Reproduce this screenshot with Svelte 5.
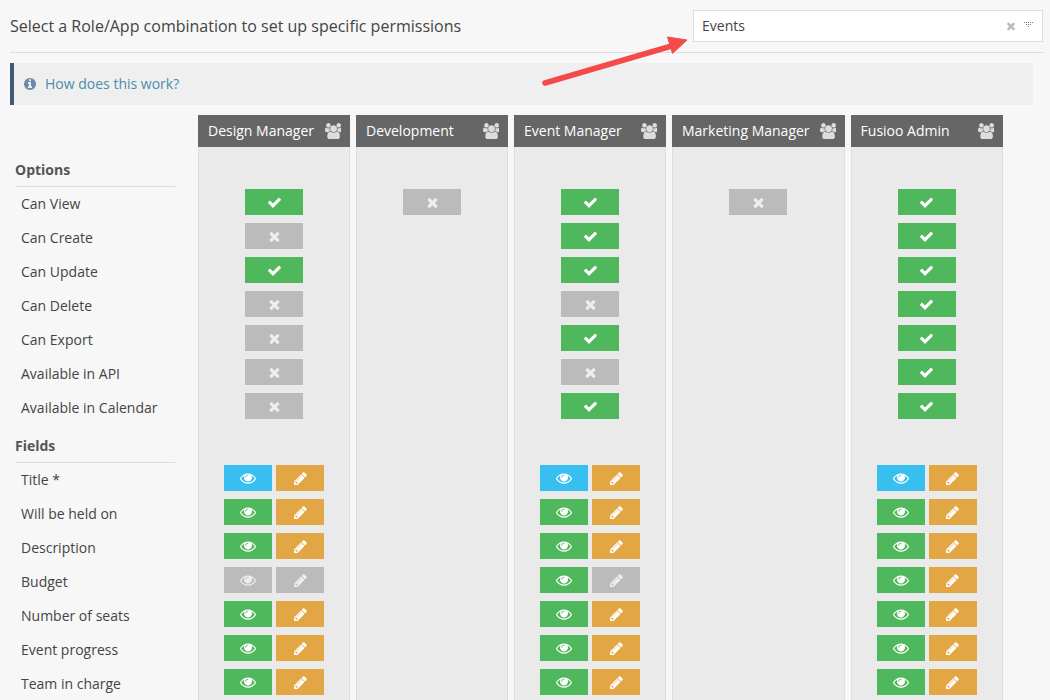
<script>
  const Y = 'y', N = 'n';
  const optionNames = ['Can View', 'Can Create', 'Can Update', 'Can Delete', 'Can Export', 'Available in API', 'Available in Calendar'];
  const fieldNames = ['Title *', 'Will be held on', 'Description', 'Budget', 'Number of seats', 'Event progress', 'Team in charge'];

  // view / edit colour per field: b = blue, g = green, o = orange, x = grey
  const allOn = [['b','o'],['g','o'],['g','o'],['g','o'],['g','o'],['g','o'],['g','o']];
  const roles = [
    { name: 'Design Manager', options: [Y,N,Y,N,N,N,N],
      fields: [['b','o'],['g','o'],['g','o'],['x','x'],['g','o'],['g','o'],['g','o']] },
    { name: 'Development', options: [N], fields: [] },
    { name: 'Event Manager', options: [Y,Y,Y,N,Y,N,Y],
      fields: [['b','o'],['g','o'],['g','o'],['g','x'],['g','o'],['g','o'],['g','o']] },
    { name: 'Marketing Manager', options: [N], fields: [] },
    { name: 'Fusioo Admin', options: [Y,Y,Y,Y,Y,Y,Y], fields: allOn }
  ];

  const caretDots = [[0,0],[2,0],[4,0],[6,0],[8,0],[2,2],[4,2],[6,2],[4,4]];

  const icons = {
    check: 'M1671 566q0 40-28 68l-724 724-136 136q-28 28-68 28t-68-28l-136-136-362-362q-28-28-28-68t28-68l136-136q28-28 68-28t68 28l294 295 656-657q28-28 68-28t68 28l136 136q28 28 28 68z',
    times: 'M1490 1322q0 40-28 68l-136 136q-28 28-68 28t-68-28l-294-294-294 294q-28 28-68 28t-68-28l-136-136q-28-28-28-68t28-68l294-294-294-294q-28-28-28-68t28-68l136-136q28-28 68-28t68 28l294 294 294-294q28-28 68-28t68 28l136 136q28 28 28 68t-28 68l-294 294 294 294q28 28 28 68z',
    eye: 'M1664 960q-152-236-381-353 61 104 61 225 0 185-131.500 316.500t-316.500 131.500-316.500-131.500-131.500-316.500q0-121 61-225-229 117-381 353 133 205 333.500 326.500t434.500 121.500 434.500-121.500 333.500-326.500zm-720-384q0-20-14-34t-34-14q-125 0-214.500 89.500t-89.500 214.500q0 20 14 34t34 14 34-14 14-34q0-86 61-147t147-61q20 0 34-14t14-34zm848 384q0 34-20 69-140 230-376.500 368.500t-499.500 138.500-499.500-139-376.500-368q-20-35-20-69t20-69q140-229 376.500-368t499.500-139 499.500 139 376.500 368q20 35 20 69z',
    pencil: 'M491 1536l91-91-235-235-91 91v107h128v128h107zm523-928q0-22-22-22-10 0-17 7l-542 542q-7 7-7 17 0 22 22 22 10 0 17-7l542-542q7-7 7-17zm-54-192l416 416-832 832h-416v-416zm683 96q0 53-37 90l-166 166-416-416 166-165q36-38 90-38 53 0 91 38l235 234q37 39 37 91z',
    users: 'M593 896q-162 5-265 128h-134q-82 0-138-40.500t-56-118.500q0-353 124-353 6 0 43.500 21t97.500 42.500 119 21.500q67 0 133-23-5 37-5 66 0 139 81 256zm1071 637q0 120-73 189.500t-194 69.500h-874q-121 0-194-69.500t-73-189.500q0-53 3.500-103.500t14-109 26.500-108.500 43-97.500 62-81 85.500-53.500 111.500-20q10 0 43 21.500t73 48 107 48 135 21.500 135-21.500 107-48 73-48 43-21.500q61 0 111.500 20t85.500 53.500 62 81 43 97.500 26.500 108.500 14 109 3.500 103.500zm-1024-1277q0 106-75 181t-181 75-181-75-75-181 75-181 181-75 181 75 75 181zm704 384q0 159-112.500 271.500t-271.500 112.500-271.500-112.500-112.500-271.500 112.500-271.500 271.500-112.500 271.500 112.500 112.500 271.500zm576 225q0 78-56 118.500t-138 40.500h-134q-103-123-265-128 81-117 81-256 0-29-5-66 66 23 133 23 59 0 119-21.500t97.500-42.500 43.500-21q124 0 124 353zm-128-609q0 106-75 181t-181 75-181-75-75-181 75-181 181-75 181 75 75 181z',
    info: 'M1152 1376v-160q0-14-9-23t-23-9h-96v-512q0-14-9-23t-23-9h-320q-14 0-23 9t-9 23v160q0 14 9 23t23 9h96v320h-96q-14 0-23 9t-9 23v160q0 14 9 23t23 9h448q14 0 23-9t9-23zm-128-896v-160q0-14-9-23t-23-9h-192q-14 0-23 9t-9 23v160q0 14 9 23t23 9h192q14 0 23-9t9-23zm640 416q0 209-103 385.500t-279.500 279.500-385.500 103-385.500-103-279.500-279.500-103-385.500 103-385.500 279.500-279.500 385.500-103 385.500 103 279.500 279.500 103 385.500z'
  };
</script>

{#snippet icon(name, size)}
  <svg class="icon" width={size} height={size} viewBox="0 0 1792 1792" fill="currentColor"><path d={icons[name]} /></svg>
{/snippet}

<div class="page">
  <header class="top">
    <h1>Select a Role/App combination to set up specific permissions</h1>
    <div class="select">
      <span class="select-value">Events</span>
      <span class="select-clear">{@render icon('times', 12)}</span>
      <svg class="select-caret" width="9" height="5" viewBox="0 0 9 5" fill="#777">
        {#each caretDots as d}<rect x={d[0]} y={d[1]} width="1" height="1" />{/each}
      </svg>
    </div>
  </header>

  <div class="info">
    <span class="info-icon">{@render icon('info', 14)}</span>
    <a href="#how">How does this work?</a>
  </div>

  <div class="matrix">
    <div class="labels">
      <h2>Options</h2>
      {#each optionNames as name}<div class="label">{name}</div>{/each}
      <h2 class="second">Fields</h2>
      {#each fieldNames as name}<div class="label">{name}</div>{/each}
    </div>

    {#each roles as role}
      <section class="role">
        <div class="role-head">
          <span class="role-name">{role.name}</span>
          <span class="role-icon">{@render icon('users', 16)}</span>
        </div>
        <div class="role-body">
          <div class="group">
            {#each role.options as opt}
              <div class="cell">
                <div class="btn wide {opt === Y ? 'g' : 'x'}">{@render icon(opt === Y ? 'check' : 'times', 15)}</div>
              </div>
            {/each}
          </div>
          {#if role.fields.length}
            <div class="group fields">
              {#each role.fields as pair}
                <div class="cell">
                  <div class="btn {pair[0]}">{@render icon('eye', 16)}</div>
                  <div class="btn {pair[1]}">{@render icon('pencil', 15)}</div>
                </div>
              {/each}
            </div>
          {/if}
        </div>
      </section>
    {/each}
  </div>

  <svg class="arrow" width="160" height="65" viewBox="0 0 160 65">
    <path d="M10 53 L140 15" stroke="#f44a4a" stroke-width="5.500" stroke-linecap="round" fill="none" />
    <path d="M132.500 7 L152 10 L137.500 23.500 Z" fill="#f44a4a" stroke="#f44a4a" stroke-width="1" stroke-linejoin="round" />
  </svg>
</div>

<style>
  :global(body) {
    background: #f7f7f7;
    font-family: "Open Sans", sans-serif;
    color: #444;
  }

  .page {
    position: relative;
    height: 700px;
    overflow: hidden;
    padding: 10px 7px 0 10px;
    box-sizing: border-box;
    display: flex;
    flex-direction: column;
  }

  .top {
    display: flex;
    justify-content: space-between;
    align-items: center;
    padding-bottom: 10px;
    border-bottom: 1px solid #ddd;
  }

  h1 {
    margin: 0;
    font-size: 16px;
    font-weight: 400;
    color: #444;
  }

  .select {
    width: 350px;
    height: 32px;
    box-sizing: border-box;
    border: 1px solid #ddd;
    background: #fff;
    padding: 0 8px;
    display: flex;
    align-items: center;
    font-size: 14px;
    color: #444;
  }
  .select-value {
    flex: 1;
    padding-bottom: 2px;
  }
  .select-clear {
    color: #bbb;
    display: flex;
    margin-right: 7px;
  }
  .select-caret {
    display: block;
    margin: 0 1px 3px 0;
  }

  .info {
    margin-top: 10px;
    width: 1023px;
    height: 42px;
    box-sizing: border-box;
    background: #efefef;
    border-left: 4px solid #3f5a78;
    padding-left: 9px;
    display: flex;
    align-items: center;
    gap: 8px;
    font-size: 14px;
  }
  .info-icon {
    display: flex;
    color: #6b8bab;
  }
  .info a {
    color: #4b8dad;
    text-decoration: none;
    padding-bottom: 2px;
  }

  .matrix {
    flex: 1;
    display: flex;
    margin-top: 10px;
    gap: 6px;
    min-height: 0;
  }

  .labels {
    width: 160px;
    margin: 0 17px 0 5px;
    padding-top: 44px;
    font-size: 14px;
  }
  h2 {
    margin: 0;
    height: 27px;
    line-height: 22px;
    font-size: 14px;
    font-weight: 700;
    color: #555;
    border-bottom: 1px solid #ddd;
  }
  h2.second {
    margin-top: 10px;
  }
  .label {
    height: 34px;
    line-height: 34px;
    padding-left: 6px;
    color: #444;
  }

  .role {
    min-width: 152px;
    display: flex;
    flex-direction: column;
  }
  .role-head {
    height: 32px;
    background: #666;
    color: #fff;
    font-size: 14px;
    padding: 0 9px 0 10px;
    display: flex;
    align-items: center;
    justify-content: space-between;
    gap: 10px;
  }
  .role-name {
    padding-bottom: 2px;
  }
  .role-icon {
    display: flex;
    color: #ddd;
  }
  .role-body {
    flex: 1;
    background: #eaeaea;
    border: solid #ddd;
    border-width: 0 1px;
    padding-top: 42px;
  }

  .group {
    display: flex;
    flex-direction: column;
    gap: 8px;
  }
  .fields {
    margin-top: 46px;
  }
  .cell {
    display: flex;
    justify-content: center;
    gap: 4px;
  }
  .btn {
    width: 48px;
    height: 26px;
    display: flex;
    align-items: center;
    justify-content: center;
    color: #fff;
  }
  .btn.wide {
    width: 58px;
  }
  .icon {
    display: block;
  }
  .g { background: #4fb75c; }
  .x { background: #bbb; }
  .b { background: #38bff0; }
  .o { background: #e2a645; }
  .btn.x { color: #eee; }

  .arrow {
    position: absolute;
    left: 535px;
    top: 30px;
    pointer-events: none;
  }
</style>
